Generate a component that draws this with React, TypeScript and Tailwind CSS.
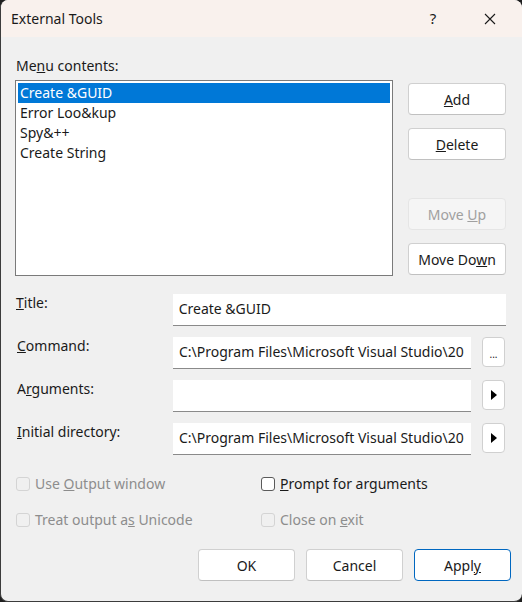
import React from "react";

const font = { fontFamily: '"Noto Sans", "Open Sans", sans-serif' };

function Btn({ children, disabled, primary, className = "" }: { children: React.ReactNode; disabled?: boolean; primary?: boolean; className?: string }) {
  return (
    <div
      className={
        "flex items-center justify-center rounded-[4px] border text-[14px] " +
        (disabled
          ? "border-[#e5e5e5] bg-[#f5f5f5] text-[#a0a0a0] "
          : primary
          ? "border-[#0067c0] bg-white text-[#1a1a1a] "
          : "border-[#d0d0d0] border-b-[#c0c0c0] bg-white text-[#1a1a1a] ") +
        className
      }
    >
      {children}
    </div>
  );
}

function Field({ value, className = "" }: { value?: string; className?: string }) {
  return (
    <div className={"flex h-[32px] items-center overflow-hidden whitespace-nowrap border-b border-[#8a8a8a] bg-white pb-[3px] pl-[6px] text-[14px] text-[#1a1a1a] " + className}>
      {value}
    </div>
  );
}

function SmallBtn({ children }: { children: React.ReactNode }) {
  return (
    <div className="ml-[11px] flex h-[30px] w-[23px] items-center justify-center rounded-[4px] border border-[#d0d0d0] bg-white text-[#1a1a1a]">
      {children}
    </div>
  );
}

function Arrow() {
  return (
    <svg width="6" height="10" viewBox="0 0 6 10">
      <path d="M0 0 L6 5 L0 10 Z" fill="#000" />
    </svg>
  );
}

function Check({ label, disabled }: { label: React.ReactNode; disabled?: boolean }) {
  return (
    <div className={"flex items-center gap-[5px] text-[14px] " + (disabled ? "text-[#8d8d8d]" : "text-[#1a1a1a]")}>
      <div className={"h-[14px] w-[14px] rounded-[3px] border " + (disabled ? "border-[#d4d4d4] bg-[#f0f0f0]" : "border-[#5a5a5a] bg-white")} />
      <span>{label}</span>
    </div>
  );
}

export default function App() {
  const items = ["Create &GUID", "Error Loo&kup", "Spy&++", "Create String"];
  const path = "C:\\Program Files\\Microsoft Visual Studio\\20";
  return (
    <div className="h-[602px] w-[522px] bg-[#1f1f1f]" style={font}>
      <div className="flex h-full w-full flex-col overflow-hidden rounded-[8px] border-b border-l border-[#3c3c3c] bg-[#f0f0f0]">
        {/* title bar */}
        <div className="flex h-[37px] shrink-0 items-center bg-[#f9f1ed] pl-[10px] text-[14px] text-[#1a1a1a]">
          <span className="flex-1">External Tools</span>
          <span className="w-[16px] text-center text-[15px]">?</span>
          <svg className="ml-[43px] mr-[26px]" width="12" height="12" viewBox="0 0 12 12">
            <path d="M1 1 L11 11 M11 1 L1 11" stroke="#1a1a1a" strokeWidth="1.1" />
          </svg>
        </div>

        <div className="flex flex-col pl-[14px] pr-[16px] pt-[20px]">
          <div className="h-[23px] pl-[1px] text-[14px] leading-[18px] text-[#1a1a1a]">
            Me<u>n</u>u contents:
          </div>
          <div className="flex">
            <div className="h-[196px] w-[379px] border border-[#7a7a7a] bg-white p-[2px] text-[14px] text-[#1a1a1a]">
              {items.map((t, i) => (
                <div key={t} className={"h-[20px] pl-[2px] leading-[20px] " + (i === 0 ? "bg-[#0078d7] text-white" : "")}>
                  {t}
                </div>
              ))}
            </div>
            <div className="ml-[15px] flex flex-col pt-[3px]">
              <Btn className="h-[32px] w-[98px]"><span><u>A</u>dd</span></Btn>
              <Btn className="mt-[13px] h-[32px] w-[98px]"><span><u>D</u>elete</span></Btn>
              <Btn disabled className="mt-[38px] h-[32px] w-[98px]"><span>Move <u>U</u>p</span></Btn>
              <Btn className="mt-[13px] h-[32px] w-[98px]"><span>Move Do<u>w</u>n</span></Btn>
            </div>
          </div>

          <div className="mt-[18px] flex flex-col gap-[11px]">
            <div className="flex items-start">
              <div className="mt-[-2px] w-[158px] pl-[1px] text-[14px] text-[#1a1a1a]"><u>T</u>itle:</div>
              <Field value="Create &GUID" className="w-[334px]" />
            </div>
            <div className="flex items-start">
              <div className="mt-[-2px] w-[158px] pl-[2px] text-[14px] text-[#1a1a1a]"><u>C</u>ommand:</div>
              <Field value={path} className="w-[298px]" />
              <SmallBtn><span className="pt-[4px] text-[10px] leading-none">...</span></SmallBtn>
            </div>
            <div className="flex items-start">
              <div className="mt-[-2px] w-[158px] pl-[2px] text-[14px] text-[#1a1a1a]">A<u>r</u>guments:</div>
              <Field className="w-[298px]" />
              <SmallBtn><Arrow /></SmallBtn>
            </div>
            <div className="flex items-start">
              <div className="mt-[-2px] w-[158px] pl-[2px] text-[14px] text-[#1a1a1a]"><u>I</u>nitial directory:</div>
              <Field value={path} className="w-[298px]" />
              <SmallBtn><Arrow /></SmallBtn>
            </div>
          </div>

          <div className="mt-[18px] grid grid-cols-[245px_1fr] gap-y-[15px] pl-[1px]">
            <Check disabled label={<>Use <u>O</u>utput window</>} />
            <Check label={<><u>P</u>rompt for arguments</>} />
            <Check disabled label={<>Treat output a<u>s</u> Unicode</>} />
            <Check disabled label={<>Close on <u>e</u>xit</>} />
          </div>

          <div className="mr-[-5px] mt-[19px] flex justify-end gap-[11px]">
            <Btn className="h-[32px] w-[97px]">OK</Btn>
            <Btn className="h-[32px] w-[97px]">Cancel</Btn>
            <Btn primary className="h-[32px] w-[97px]"><span>Appl<u>y</u></span></Btn>
          </div>
        </div>
      </div>
    </div>
  );
}
